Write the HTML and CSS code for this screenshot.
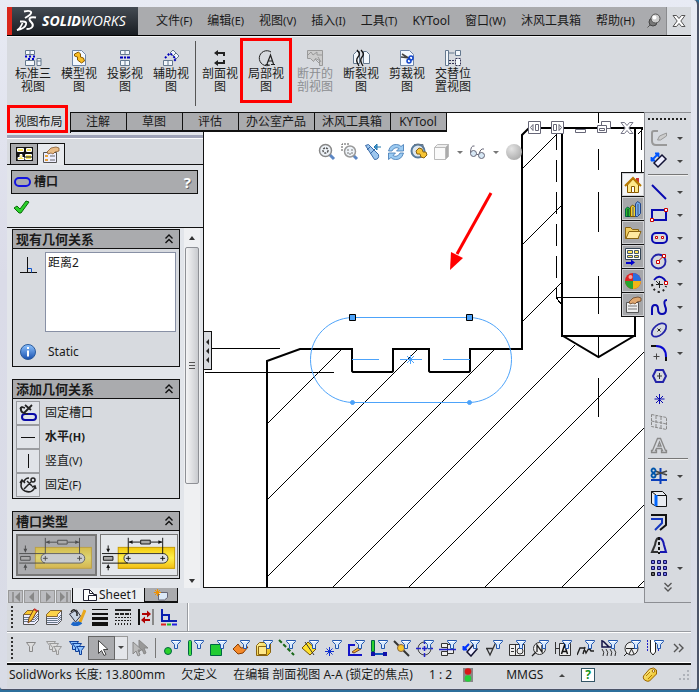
FILE: index.html
```html
<!DOCTYPE html>
<html lang="zh-CN">
<head>
<meta charset="utf-8">
<title>SolidWorks</title>
<link rel="stylesheet" href="styles.css">
</head>
<body>
<svg class="defs" aria-hidden="true">
  <defs>
    <linearGradient id="blue" x1="0" y1="0" x2="0" y2="1"><stop offset="0" stop-color="#8fc4ff"/><stop offset="1" stop-color="#174fae"/></linearGradient>
    <linearGradient id="yellow" x1="0" y1="0" x2="1" y2="1"><stop offset="0" stop-color="#fff6a8"/><stop offset="1" stop-color="#e8b400"/></linearGradient>
    <linearGradient id="bar" x1="0" y1="0" x2="0" y2="1"><stop offset="0" stop-color="#f2c80c"/><stop offset=".5" stop-color="#fff04a"/><stop offset="1" stop-color="#f2bd12"/></linearGradient>
    <radialGradient id="ball" cx=".35" cy=".3" r=".8"><stop offset="0" stop-color="#e4e4e4"/><stop offset="1" stop-color="#a9a9a9"/></radialGradient>
    <symbol id="funnel" viewBox="0 0 18 18"><path d="M8.500 1.500h9v1l-3 3v4h-3v-4l-3-3z" fill="#d8eaff" stroke="#2357ad"/><path d="M10 2.500h5" stroke="#fff"/></symbol>
    <symbol id="sheet" viewBox="0 0 18 18"><path d="M2.500 1.500h9l4 4v11h-13z" fill="#f3f8ff" stroke="#6f86a8"/></symbol>
    <symbol id="chev" viewBox="0 0 10 12"><path d="M1.500 5.500l3.500-3.500 3.500 3.500M1.500 10l3.500-3.500 3.500 3.500" fill="none" stroke="#111" stroke-width="1.400"/></symbol>
    <symbol id="slot" viewBox="0 0 80 40">
      <rect x="18" y="12" width="59" height="22" fill="url(#bar)" stroke="#c79a00"/>
      <rect x="24" y="18.500" width="46" height="10" rx="5" fill="#dfe2e6" stroke="#333"/>
      <path d="M28.500 2v17M64.500 2v17M1 18.500h27M1 28.500h27M29 6.500h12M52 6.500h12M7.500 10v6M7.500 31v5M26 23.500h5M28.500 21v5M62 23.500h5M64.500 21v5" stroke="#111" fill="none"/>
      <path d="M29 6.500l4-2v4zM64 6.500l-4-2v4zM7.500 17.500l-2-4h4zM7.500 29.500l-2 4h4z" fill="#111"/>
      <path d="M41.500 4.500h10v4h-10zM2.500 21.500h10v4h-10z" fill="#aaa" stroke="#111"/>
    </symbol>
  </defs>
</svg>
<div class="window">
  <header class="menubar">
    <div class="logo">
      <svg width="22" height="24" viewBox="0 0 22 24" fill="none" stroke="#fff" aria-hidden="true"><path d="M8 2.500q6-1.500 7 .5t-6 6" stroke-width="2"/><path d="M4 12.500h3q4 0 3 3-1 4-9 5.500 3-1 5.500-7" stroke-width="1.800"/><path d="M20 8.500q-7-1-6.500 2 0 1 2 3t1 4q-1 2.500-6 2.500" stroke-width="2"/></svg>
      <span><b>SOLID</b>WORKS</span>
    </div>
    <nav class="menus">
      <button>文件<small>(F)</small></button><button>编辑<small>(E)</small></button><button>视图<small>(V)</small></button><button>插入<small>(I)</small></button><button>工具<small>(T)</small></button><button>KYTool</button><button>窗口<small>(W)</small></button><button>沐风工具箱</button><button>帮助<small>(H)</small></button>
    </nav>
    <button class="pin" aria-label="固定菜单"><svg width="16" height="16" viewBox="0 0 16 16"><path d="M1.500 14.500l5-5" stroke="#555"/><circle cx="7" cy="9" r="4" fill="#777" stroke="#444"/><circle cx="9.500" cy="5.500" r="4.500" fill="#ccc" stroke="#555"/><circle cx="8.500" cy="4.500" r="2" fill="#fff"/></svg></button>
    <button class="close" aria-label="关闭"><svg width="14" height="12" viewBox="0 0 14 12"><path d="M1 .5h3.500l2.500 3 2.500-3h3.500l-4.200 5.500 4.200 5.500h-3.500l-2.500-3-2.500 3h-3.500l4.200-5.500z" fill="#fff" stroke="#555"/></svg></button>
  </header>

  <section class="ribbon" aria-label="视图布局命令">
    <button><svg viewBox="0 0 18 18"><path d="M1.500 1.500h9v4h-9zM6 1.500v4M1.500 11.500h9v5h-9zM13 9.500h4v7h-4zM13 12h4" fill="#f3f7fb" stroke="#64788e"/><path d="M1 7.500h10M4 10h6" stroke="#00c" stroke-width="2" stroke-dasharray="2 2"/></svg>标准三<br>视图</button>
    <button><svg viewBox="0 0 18 18"><use href="#sheet"/><path d="M4.500 5l4-2 2 2v3l3 1 1 3-3 2-4-3v-3l-3-1z" fill="#f9bd24" stroke="#8a5a00"/></svg>模型视<br>图</button>
    <button><svg viewBox="0 0 18 18"><path d="M4.500 1.500h9v4h-9zM9 1.500v4M4.500 11.500h9v5h-9zM9 11.500v5" fill="#f3f7fb" stroke="#64788e"/><path d="M4 8.500h10" stroke="#00b" stroke-width="2" stroke-dasharray="3 1 2 1"/></svg>投影视<br>图</button>
    <button><svg viewBox="0 0 18 18"><path d="M8 4l3-3 6 6-3 3zM11 7l3-3M1.500 11.500h9v5h-9zM6 11.500v5" fill="#f3f7fb" stroke="#64788e"/><path d="M3 9l5-5 6 6-3 3" fill="none" stroke="#00b" stroke-width="2" stroke-dasharray="2 2"/></svg>辅助视<br>图</button>
    <i class="rule"></i>
    <button><svg viewBox="0 0 18 18"><path d="M6 4h7v3M13 11v3h-7" fill="none" stroke="#222" stroke-width="2"/><path d="M7 1v6l-4-3zM7 11v6l-4-3z" fill="#222"/></svg>剖面视<br>图</button>
    <button class="marked"><svg viewBox="0 0 18 18"><path d="M14 3a7.500 7.500 0 1 0-1 13" fill="none" stroke="#222"/><path d="M8.500 15.500h3M14 15.500h4M10 15l3.500-9 3 9M11 12h4" fill="none" stroke="#222" stroke-width="1.200"/></svg>局部视<br>图</button>
    <i class="gap"></i>
    <button disabled><svg viewBox="0 0 18 18"><path d="M1.500 1.500h15v15h-3v-5l-4-2-2 3-3-3h-3z" fill="#ccc" stroke="#999"/><path d="M2 6l3-3 2 3 4-3v3h5M9 10l5 5M12 8l3 5" stroke="#999" fill="none"/></svg>断开的<br>剖视图</button>
    <button><svg viewBox="0 0 18 18"><path d="M1.500 5.500l3-3h3v12h-6zM11.500 2.500h3l3 3v9h-6z" fill="#f3f7fb" stroke="#64788e"/><path d="M5 1q4 4 1 7t1 9M9 1q4 4 1 7t1 9" fill="none" stroke="#111" stroke-width="1.300"/></svg>断裂视<br>图</button>
    <button><svg viewBox="0 0 18 18"><use href="#sheet"/><path d="M4 5l8 5M3 8l9 1" stroke="#444" stroke-width="1.500"/><circle cx="13" cy="9" r="2" fill="none" stroke="#14c" stroke-width="1.500"/><circle cx="11" cy="12" r="2" fill="none" stroke="#14c" stroke-width="1.500"/></svg>剪裁视<br>图</button>
    <button><svg viewBox="0 0 18 18" fill="#f3f7fb" stroke="#64788e"><path d="M1.500 1.500h3v15h-3zM4.500 4h6M11.500 1.500h5v5h-5z"/><path d="M5 11.500h5M11.500 9.500h5v7h-5zM5 14.500h5" stroke="#335" stroke-dasharray="2 1"/></svg>交替位<br>置视图</button>
  </section>

  <main class="workspace">
    <nav class="tabs">
      <button class="active">视图布局</button><button>注解</button><button>草图</button><button>评估</button><button>办公室产品</button><button>沐风工具箱</button><button>KYTool</button>
    </nav>

    <aside class="panel">
      <div class="panel-tabs">
        <button aria-label="特征树"><svg width="17" height="14" viewBox="0 0 17 14"><path d="M0 0h17v14h-17z" fill="#111"/><path d="M1.500 1.500h6v3h-6zM10.500 1.500h5v3h-5zM9.500 7.500h6v5h-6zM2 12.500v-2h2v-3h2v3h2v2z" fill="#f7e65a" stroke="#fff"/><path d="M9 10h7" stroke="#111"/></svg></button>
        <button class="active" aria-label="属性"><svg width="18" height="18" viewBox="0 0 18 18"><path d="M1.500 6.500h13v10h-13z" fill="#eef" stroke="#555"/><path d="M3 9h3v2h-3zM3 13h3v2h-3z" fill="#e8a33a"/><path d="M8 10h5M8 14h5" stroke="#666"/><path d="M5 6l4-4 5-1 3 1v3l-4 1-2 2-2-1-3 1z" fill="#e9bb85" stroke="#7a4b1c" stroke-width=".7"/></svg></button>
      </div>
      <h1 class="feature"><svg width="17" height="12" viewBox="0 0 17 12"><rect x="1" y="2" width="15" height="8" rx="4" fill="#aaabae" stroke="#1414e0" stroke-width="2"/></svg><span>槽口</span><button aria-label="帮助">?</button></h1>
      <div class="confirm"><button aria-label="确定"><svg width="17" height="14" viewBox="0 0 17 14"><path d="M1 8l3-2 3 3 6-8 3 1-8 11h-2z" fill="#2bd12b" stroke="#0a6b0a"/></svg></button></div>
      <div class="scroller">
        <div class="groups">
          <section class="group">
            <h2>现有几何关系<svg width="10" height="12"><use href="#chev"/></svg></h2>
            <div class="existing">
              <svg width="18" height="18" viewBox="0 0 18 18" fill="none"><path d="M8.500 1v16M1 16.500h17" stroke="#111"/><path d="M9 12.500h3.500v4" stroke="#15c"/></svg>
              <select size="4" aria-label="现有几何关系"><option>距离2</option></select>
            </div>
            <p class="info"><svg width="18" height="18" viewBox="0 0 18 18"><circle cx="9" cy="9" r="7.500" fill="url(#blue)" stroke="#2b5b9c"/><path d="M9 4v2M9 7.500v6" stroke="#fff" stroke-width="2"/></svg>Static</p>
          </section>
          <section class="group">
            <h2>添加几何关系<svg width="10" height="12"><use href="#chev"/></svg></h2>
            <div class="relations">
              <button id="fix-slot"><svg viewBox="0 0 18 18" fill="none"><rect x="3" y="10" width="14" height="6" rx="3" stroke="#0a0aa8" stroke-width="2"/><path d="M6 1l6 5M13 1l-8 8M2 3q-1 5 3 6l4 1M1 5l2-2 3 1" stroke="#222" stroke-width="1.800"/></svg></button><label for="fix-slot">固定槽口</label>
              <button id="horizontal"><svg viewBox="0 0 18 18"><path d="M2 9.500h14" stroke="#111"/></svg></button><label for="horizontal"><b>水平<small>(H)</small></b></label>
              <button id="vertical"><svg viewBox="0 0 18 18"><path d="M9.500 2v14" stroke="#111"/></svg></button><label for="vertical">竖直<small>(V)</small></label>
              <button id="fix"><svg viewBox="0 0 18 18" fill="none" stroke="#222" stroke-width="1.500"><circle cx="14" cy="4" r="2"/><path d="M12 6l-7 7M8 5l5 5M3 5q-3 7 3 10 7 3 10-4M1 7l2-3 3 3M17 13l-1-3-3 1M10 2q-4 0-5 4"/></svg></button><label for="fix">固定<small>(F)</small></label>
            </div>
          </section>
          <section class="group">
            <h2>槽口类型<svg width="10" height="12"><use href="#chev"/></svg></h2>
            <div class="slots">
              <button class="pressed" aria-label="直槽口"><svg viewBox="0 0 80 40"><use href="#slot"/></svg></button>
              <button aria-label="中心点槽口"><svg viewBox="0 0 80 40"><use href="#slot"/></svg></button>
            </div>
          </section>
        </div>
        <div class="scrollbar" aria-hidden="true"><svg width="6" height="4"><path d="M0 4h6l-3-4z" fill="#333"/></svg><span></span><svg width="6" height="4"><path d="M0 0h6l-3 4z" fill="#333"/></svg></div>
      </div>
    </aside>

    <section class="canvas" aria-label="工程图">
      <svg class="drawing" aria-hidden="true">
        <g transform="translate(-204 -113)" fill="none" stroke="#000">
          <g shape-rendering="crispEdges">
            <path d="M268 423l73-73M268 499l150-150M268 576l226-226M332 588l243-243M408 588l236-236M484 588l160-160M561 588l83-83M637 588l7-7M523 168l38-38M523 244l38-38M523 321l38-38M638 134l5-5"/>
            <path d="M211 348.500h69M205 372.500h129M556 297.500h79M556.500 298l6 8M598.500 113v10M598.500 149v21M598.500 192v40M598.500 276v38M598.500 336v21M598.500 378v39"/>
            <path d="M556.500 128v170M641.500 128v170" stroke-dasharray="22 10"/>
          </g>
          <path stroke-width="2" d="M267 588v-227l33-12h52v22l1 1h39l1-1v-22h36v22l1 1h39l1-1v-22h52v-214l7-7h114M562 128v208h73v-208M563 336l35.500 21 35.500-21"/>
          <g stroke="#4da3fa">
            <path d="M352 317.500h118c23 1 41.500 19 41.500 42s-18.500 42-41.500 43h-118c-23-1-41.500-20-41.500-43s18.500-41 41.500-42z"/>
            <path d="M352 359.500h27M400 359.500h22M443 359.500h27M410.500 355v9M407 356l7 7M414 356l-7 7"/>
            <circle cx="352.500" cy="402.500" r="2" fill="#4da3fa"/><circle cx="469.500" cy="402.500" r="2" fill="#4da3fa"/>
            <path d="M349.500 314.500h6v6h-6zM466.500 314.500h6v6h-6z" fill="#4da3fa" stroke="#000"/>
          </g>
          <path d="M491 193l-34 61" stroke="#f00" stroke-width="3"/><path d="M450 270l1-18 12 6z" fill="#f00" stroke="none"/>
        </g>
      </svg>
      <div class="hud">
        <button aria-label="整屏显示"><svg viewBox="0 0 18 18"><path d="M11 11l5 5" stroke="#5b86c4" stroke-width="3"/><circle cx="7.500" cy="7.500" r="6" fill="#eef3f8" stroke="#888" stroke-width="1.500"/><circle cx="7.500" cy="7.500" r="2.500" fill="none" stroke="#555" stroke-width="1.500" stroke-dasharray="2 1"/></svg></button>
        <button aria-label="局部放大"><svg viewBox="0 0 18 18"><path d="M1 8v-7h8" fill="none" stroke="#555" stroke-dasharray="2 1"/><path d="M12 12l4 4" stroke="#5b86c4" stroke-width="3"/><circle cx="9" cy="8.500" r="5.500" fill="#eef3f8" stroke="#999" stroke-width="1.500"/><path d="M7 6v5h4v-5" stroke="#777" fill="none" stroke-dasharray="2 1"/></svg></button>
        <button aria-label="上一视图"><svg viewBox="0 0 18 18"><path d="M1.500 2.500l3-1 10 10q1 5-4 5z" fill="#9dc6ee" stroke="#3b6ba8"/><path d="M3 7l4-4M6 11l5-5" stroke="#3b6ba8"/><path d="M10 4h7M10 4l3-3v6z" stroke="#27a" fill="#58a8f0"/></svg></button>
        <button aria-label="旋转"><svg viewBox="0 0 18 18"><path d="M1.500 8q2-7 8-6.500 3 0 4.500 2l2.500-2v6.500h-7l2.500-2.500q-2-1.500-4-.5-2 .5-3 3zM16.500 10q-2 7-8 6.500-3 0-4.500-2l-2.500 2v-6.500h7l-2.500 2.500q2 1.500 4 .5 2-.5 3-3z" fill="#9ccbf2" stroke="#3d76b2" stroke-width=".8"/></svg></button>
        <button aria-label="3D工程图"><svg viewBox="0 0 18 18"><circle cx="8" cy="8" r="6.500" fill="#dde6ee" stroke="#567a9c" stroke-width="2"/><path d="M4 1.500h9v4" fill="none" stroke="#678"/><path d="M6 8l3-3 3 1 1 3h3l1 3-3 3-3-1-1-3h-3z" fill="#f7c535" stroke="#8a6410"/></svg></button>
        <button aria-label="显示样式"><svg viewBox="0 0 18 18" fill="#eee" stroke="#bbb"><path d="M1.500 4.500l3-3h11l-3 3z"/><path d="M12.500 4.500l3-3v12l-3 3z" fill="#aaa"/><path d="M1.500 4.500h11v12h-11z" fill="#fafafa"/></svg></button>
        <i class="caret"></i>
        <button aria-label="隐藏/显示项目"><svg viewBox="0 0 18 18" fill="#d7e8f5" stroke="#667"><path d="M1.500 10q0-8 4-7M10 12q1-7 5-6M7 11l3 1" fill="none"/><circle cx="4.500" cy="10.500" r="3"/><circle cx="12.500" cy="12.500" r="3"/></svg></button>
        <i class="caret"></i>
        <button aria-label="布景"><svg viewBox="0 0 18 18"><circle cx="9" cy="9" r="8" fill="url(#ball)"/></svg></button>
      </div>
      <div class="docbuttons">
        <button aria-label="左侧"><svg viewBox="0 0 14 14" fill="#fff" stroke="#667"><path d="M.5 .5h12v12h-12z"/><path d="M5 3.500l-2.500 3 2.500 3zM7.500 3.500h3v6h-3z"/></svg></button>
        <button aria-label="右侧"><svg viewBox="0 0 14 14" fill="#fff" stroke="#667"><path d="M.5 .5h12v12h-12z"/><path d="M8 3.500l2.500 3-2.500 3zM2.500 3.500h3v6h-3z"/></svg></button>
        <button aria-label="最小化"><svg viewBox="0 0 14 14"><path d="M1.500 8.500h10v3h-10z" fill="#fff" stroke="#667"/></svg></button>
        <button aria-label="还原"><svg viewBox="0 0 14 14" fill="#fff" stroke="#667"><path d="M4.500 .5h9v7h-9z"/><path d="M.5 4.500h9v7h-9zM2.500 7.500h5v2h-5z"/></svg></button>
        <button aria-label="关闭文档"><svg viewBox="0 0 14 12"><path d="M1 .5h3.500l2.500 3 2.500-3h3.500l-4.200 5.500 4.200 5.500h-3.500l-2.500-3-2.500 3h-3.500l4.200-5.500z" fill="#fff" stroke="#778"/></svg></button>
      </div>
      <button class="collapse" aria-label="折叠面板"><svg width="4" height="26" viewBox="0 0 4 26"><path d="M4 1v6l-3-3zM4 10v6l-3-3zM4 19v6l-3-3z" fill="#222"/></svg></button>
      <div class="taskpane">
        <button class="active" aria-label="资源"><svg viewBox="0 0 18 18"><path d="M12 2h3v5h-3z" fill="#c33"/><path d="M3.500 9v7.500h11v-7.500l-5.500-6z" fill="#ffe98a" stroke="#8a5a00"/><path d="M1 10l8-8 8 8" fill="none" stroke="#b97a00" stroke-width="2"/><path d="M7.500 10.500h3v6h-3z" fill="#fff" stroke="#8a5a00"/></svg></button>
        <button aria-label="设计库"><svg viewBox="0 0 18 18"><path d="M1.500 9l2-2 3 2v7.500h-5z" fill="#2bb52b" stroke="#064"/><path d="M4 9v8M9 7v10M14 4v11" stroke="#033"/><path d="M6.500 7l2-2 3 2v9.500h-5z" fill="#f5d02a" stroke="#750"/><path d="M11.500 4l2-2.500 3 2v10l-3 3h-2z" fill="#76aef0" stroke="#248"/><path d="M9 7v9M14 4v11" stroke="#457"/></svg></button>
        <button aria-label="文件探索器"><svg viewBox="0 0 18 18"><path d="M1.500 14.500v-11h5l2 2h6v9z" fill="#f2cf63" stroke="#8a6410"/><path d="M2 14.500l3-7h12l-3 7z" fill="#ffe9a0" stroke="#8a6410"/></svg></button>
        <button aria-label="视图调色板"><svg viewBox="0 0 18 18"><path d="M1.500 .5h15v11h-15z" fill="#fff" stroke="#345"/><path d="M3.500 2.500h5v3h-5zM10.500 2.500h4v3h-4zM3.500 7.500h5v2h-5zM10.500 7.500h4v2h-4z" fill="#ffe45a" stroke="#456"/><path d="M2 15h7" stroke="#00c" stroke-width="2"/><path d="M7 11.500v6l4-3z" fill="#00c"/></svg></button>
        <button aria-label="外观"><svg viewBox="0 0 18 18"><circle cx="9" cy="9" r="8" fill="#d22"/><path d="M9 9v-8a8 8 0 0 1 8 8z" fill="#2a6ee0"/><path d="M9 9h8a8 8 0 0 1-8 8z" fill="#f2b517"/><path d="M9 9v8a8 8 0 0 1-8-8z" fill="#27a52f"/><circle cx="6.500" cy="5" r="2" fill="#fff" opacity=".6"/></svg></button>
        <button aria-label="自定义属性"><svg viewBox="0 0 18 18"><path d="M2.500 6.500h12v10h-12z" fill="#eee" stroke="#555"/><path d="M4 10h9M4 13h9" stroke="#777"/><path d="M5 6l4-4 5-1 3 1v3l-4 1-2 2-2-1-3 1z" fill="#e0a870" stroke="#6b4423" stroke-width=".8"/></svg></button>
      </div>
    </section>

    <div class="sheets">
      <div class="sheetnav">
        <button aria-label="首页"><svg viewBox="0 0 8 10"><path d="M1 0v10" stroke="#888" stroke-width="1.500"/><path d="M8 0v10l-5-5z" fill="#888"/></svg></button><button aria-label="上一页"><svg viewBox="0 0 8 10"><path d="M6 0v10l-5-5z" fill="#888"/></svg></button><button aria-label="下一页"><svg viewBox="0 0 8 10"><path d="M2 0v10l5-5z" fill="#888"/></svg></button><button aria-label="末页"><svg viewBox="0 0 8 10"><path d="M0 0v10l5-5z" fill="#888"/><path d="M7 0v10" stroke="#888" stroke-width="1.500"/></svg></button>
      </div>
      <button class="sheet"><svg width="14" height="12" viewBox="0 0 14 12"><path d="M.5 .5h6l4 4v1h3v6h-13z" fill="#fff" stroke="#223"/><path d="M6.500 .5v4h4M5.500 11v-4.500h8" fill="none" stroke="#223"/></svg>Sheet1</button>
      <button class="addsheet" aria-label="添加图纸"><svg width="15" height="12" viewBox="0 0 15 12"><path d="M4.500 3.500h9v5l-3 2.500h-6z" fill="#dce9f7" stroke="#667"/><path d="M3.500 0v7M0 3.500h7M1 1l5 5M6 1l-5 5" stroke="#f29200"/></svg></button>
    </div>

    <nav class="tools" aria-label="草图工具">
      <i class="grip"></i>
      <button disabled class="drop" aria-label="草图"><svg viewBox="0 0 18 18" fill="none" stroke="#999"><path d="M8 2h-4q-2 0-2 2v8q0 4 4 4h11" stroke-width="2"/><path d="M7.500 11l2-4 7-3v3l-6 4z" fill="#ccc"/></svg></button>
      <button class="drop" aria-label="智能尺寸"><svg viewBox="0 0 18 18" fill="none"><path d="M2 8l6-6M1.500 9v-4M1 8.500h4M8.500 1v4M9 1.500h-4" stroke="#05f" stroke-width="1.800"/><path d="M4 11l8-8 4 4-8 8z" stroke="#113" stroke-width="1.500" fill="#eef"/></svg></button>
      <hr>
      <button class="drop" aria-label="直线"><svg viewBox="0 0 18 18"><path d="M2 2l14 14" stroke="#0909b0" stroke-width="2"/></svg></button>
      <button class="drop" aria-label="矩形"><svg viewBox="0 0 18 18" fill="none"><path d="M2 4h14v10h-14z" stroke="#0909b0" stroke-width="2"/><path d="M.5 12.500h3v3h-3zM14.500 2.500h3v3h-3z" fill="#fff" stroke="#c00"/></svg></button>
      <button class="drop" aria-label="槽口"><svg viewBox="0 0 18 18" fill="none"><rect x="2" y="4" width="15" height="10" rx="4" stroke="#0909b0" stroke-width="2"/><path d="M5.500 7.500h2v2h-2zM11.500 7.500h2v2h-2z" fill="#fff" stroke="#c00"/></svg></button>
      <button class="drop" aria-label="圆"><svg viewBox="0 0 18 18" fill="none"><circle cx="8.500" cy="9.500" r="7" stroke="#2323a8" stroke-width="1.800"/><path d="M8 9.500l6-6" stroke="#c00"/><path d="M6.500 8.500h3v3h-3zM12.500 2.500h3v3h-3z" fill="#fff" stroke="#c00"/></svg></button>
      <button class="drop" aria-label="圆弧"><svg viewBox="0 0 18 18" fill="none"><path d="M4 5q5-6 10-1 2 2 2 4" stroke="#0909b0" stroke-width="1.800"/><path d="M9.500 6v7M6 9.500h7M6 6l3 3" stroke="#222"/><path d="M2 9q1 7 7 8 6-1 7-6" stroke="#222" stroke-width="2" stroke-dasharray="2 3"/><path d="M14.500 6.500h3v3h-3z" fill="#fff" stroke="#c00"/></svg></button>
      <button class="drop" aria-label="样条曲线"><svg viewBox="0 0 18 18"><path d="M2 17v-6q0-4 3-4t3 4q0 5 4 5t4-4q0-2-1-4-2-6 2-6" fill="none" stroke="#0909b0" stroke-width="2"/></svg></button>
      <button class="drop" aria-label="椭圆"><svg viewBox="0 0 18 18" fill="none"><ellipse cx="9" cy="9" rx="8.500" ry="5" transform="rotate(-40 9 9)" stroke="#2323a8" stroke-width="1.800"/><path d="M7.500 7.500l3 3M10.500 7.500l-3 3" stroke="#222"/></svg></button>
      <button class="drop" aria-label="圆角"><svg viewBox="0 0 18 18" fill="none"><path d="M1 2h5M16 13v4" stroke="#111" stroke-width="2"/><path d="M6 2q10 0 10 11" stroke="#0909d0" stroke-width="2"/><path d="M3.500 12.500h6M6.500 9.500v6" stroke="#444"/></svg></button>
      <button aria-label="多边形"><svg viewBox="0 0 18 18" fill="none"><path d="M6 3h7l3 6-3 6h-7l-3-6z" stroke="#2323a8" stroke-width="2"/><path d="M7 9h5M9.500 6v6" stroke="#333"/></svg></button>
      <button aria-label="点"><svg viewBox="0 0 18 18"><path d="M9.500 4v10M4.500 9h10M6 6l7 7M13 6l-7 7" stroke="#0909b0"/></svg></button>
      <button disabled aria-label="基准面"><svg viewBox="0 0 18 18"><path d="M1.500 1.500l15 3v12l-15-3zM1.500 8l15 3M6 3v11M11 4v11" fill="none" stroke="#888" stroke-dasharray="3 1"/></svg></button>
      <button disabled aria-label="文字"><svg viewBox="0 0 18 18" fill="none" stroke="#888" stroke-width="1.300"><path d="M1.500 16.500v-2h1l5-12h3l5 12h1v2h-5v-2h1l-1-2h-5l-1 2h1v2zM8 10h3l-1.500-4z"/></svg></button>
      <hr>
      <button class="drop" aria-label="剪裁实体"><svg viewBox="0 0 18 18" fill="none"><path d="M1 13h16M10.500 1v16" stroke="#0b3fbb" stroke-width="2"/><path d="M5 4l12 4M5 8l12-4" stroke="#444" stroke-width="1.800"/><circle cx="3.500" cy="3.500" r="2" stroke="#05a" stroke-width="1.800"/><circle cx="3.500" cy="8.500" r="2" stroke="#05a" stroke-width="1.800"/></svg></button>
      <button class="drop" aria-label="转换实体引用"><svg viewBox="0 0 18 18"><path d="M1.500 1.500h11l4 4v11h-10l-5-3zM1.500 1.500l5 4v11M6.500 5.500h10" fill="#e8ebf0" stroke="#111"/><path d="M6 5v11" stroke="#06f" stroke-width="3"/></svg></button>
      <button aria-label="等距实体"><svg viewBox="0 0 18 18" fill="none"><path d="M1 2h15v10l-6 5" stroke="#111" stroke-width="2"/><path d="M1 6h11v4l-7 7" stroke="#1437c0" stroke-width="2"/></svg></button>
      <button aria-label="镜向实体"><svg viewBox="0 0 18 18" fill="none"><path d="M8 2q-2 1-3 7l-3 7h6" stroke="#333" stroke-width="2"/><path d="M10 2q3 1 4 7l2 7h-6" stroke="#1717b0" stroke-width="2"/><path d="M9 1v17" stroke="#111" stroke-width="2" stroke-dasharray="3 2"/></svg></button>
      <button class="drop" aria-label="线性阵列"><svg viewBox="0 0 18 18" fill="#7777e8" stroke="#101060"><path d="M1.500 1.500h3v3h-3zM7.500 1.500h3v3h-3zM13.500 1.500h3v3h-3zM1.500 7.500h3v3h-3zM7.500 7.500h3v3h-3zM13.500 7.500h3v3h-3zM7.500 13.500h3v3h-3zM13.500 13.500h3v3h-3z"/><path d="M1.500 13.500h3v3h-3z" fill="#666" stroke="#111"/></svg></button>
      <button class="more" aria-label="更多"><svg viewBox="0 0 10 12"><path d="M1.500 2l3.500 3.500 3.500-3.500M1.500 6.500l3.500 3.500 3.500-3.500" fill="none" stroke="#555" stroke-width="1.300"/></svg></button>
    </nav>
  </main>

  <section class="strip format" aria-label="线型">
    <i class="grip"></i>
    <button aria-label="图层属性"><svg viewBox="0 0 18 18"><path d="M1.500 6.500l4-4h11v10l-4 4h-11z" fill="#eef" stroke="#555"/><path d="M1.500 6.500l4-4h11l-4 4z" fill="#f8c62d" stroke="#863"/><path d="M2 9.500h10.500l4-4M2 11.500h10.500l4-4M2 13.500h10.500l4-4" fill="none" stroke="#678"/><path d="M6 15l1-5 5-9 3 2-5 9z" fill="#f8c62d" stroke="#742"/><path d="M12 1l3 2" stroke="#c33" stroke-width="2"/></svg></button>
    <button aria-label="图层"><svg viewBox="0 0 18 18"><path d="M1.500 6.500l4-4h11v10l-4 4h-11z" fill="#eef" stroke="#555"/><path d="M1.500 6.500l4-4h11l-4 4v2h-11z" fill="#fbd24a" stroke="#863"/><path d="M2 10.500h10.500l4-4M2 12.500h10.500l4-4M2 14.500h10.500l4-4" fill="none" stroke="#678"/></svg></button>
    <button aria-label="线色"><svg viewBox="0 0 18 18"><path d="M4 15q4 3 9-1" stroke="#1c66c8" stroke-width="4" fill="none"/><path d="M1.500 6l7-4 4 6-5 6z" fill="#c8d3e3" stroke="#334"/><path d="M3 4q3-5 6 1v3" fill="none" stroke="#222" stroke-width="1.500"/><path d="M12 14l5-12" fill="none" stroke="#e8a71c" stroke-width="3"/></svg></button>
    <button aria-label="线粗"><svg viewBox="0 0 18 18" stroke="#111"><path d="M1 1.500h16"/><path d="M1 6h16" stroke-width="2"/><path d="M1 10.500h16" stroke-width="3"/><path d="M1 16h16" stroke-width="4"/></svg></button>
    <button aria-label="线条样式"><svg viewBox="0 0 18 18" stroke="#222"><path d="M1 2h16" stroke-width="2"/><path d="M1 6h16" stroke-width="2" stroke-dasharray="4 1"/><path d="M1 9.500h16M1 12.500h16" stroke-dasharray="2 1"/><path d="M1 16h16" stroke-width="2" stroke-dasharray="1 2"/></svg></button>
    <button aria-label="隐藏边线"><svg viewBox="0 0 18 18"><path d="M2 1v16" stroke="#111" stroke-width="2"/><path d="M16 1v16" stroke="#888" stroke-width="2"/><path d="M5 6h6M7 12h6" stroke="#b00000" stroke-width="2"/><path d="M10 2.500v7l4-3.500zM8 8.500v7l-4-3.500z" fill="#b00000"/></svg></button>
    <button aria-label="颜色显示模式"><svg viewBox="0 0 18 18" fill="none"><path d="M2 1v12h15M2 7h7v6" stroke="#0a1fb0" stroke-width="2"/><path d="M1 16.500h5" stroke="#d22" stroke-width="2"/><path d="M7 16.500h4" stroke="#2b2" stroke-width="2"/><path d="M12 16.500h5" stroke="#22d" stroke-width="2"/></svg></button>
  </section>

  <section class="strip filters" aria-label="选择过滤器">
    <i class="grip"></i>
    <button disabled aria-label="切换过滤器"><svg viewBox="0 0 18 18"><path d="M4.500 3.500h9l-3 4v5h-3v-5z" fill="#ddd" stroke="#888"/></svg></button>
    <button disabled aria-label="清除过滤器"><svg viewBox="0 0 18 18" fill="#ddd" stroke="#999"><path d="M1.500 2.500h9l-3 4v4h-3v-4z"/><path d="M4.500 4.500h9l-3 4v4h-3v-4z"/><path d="M8.500 7.500h8l-3 4v4h-2v-4z"/></svg></button>
    <button aria-label="所有过滤器"><svg viewBox="0 0 18 18" fill="#8fc4ff" stroke="#0f3f98"><path d="M1.500 2.500h9l-3 4v4h-3v-4z"/><path d="M4.500 4.500h9l-3 4v4h-3v-4z"/><path d="M8.500 7.500h8l-3 4v4h-2v-4z"/></svg></button>
    <button class="select" aria-label="选择"><svg viewBox="0 0 18 18"><path d="M5.500 1.500v13l3-3 2.500 5 2-1-2.500-5h4.500z" fill="#fff" stroke="#444"/></svg></button><button class="selectdrop" aria-label="选择选项"><i class="caret"></i></button>
    <button disabled aria-label="逆转选择"><svg viewBox="0 0 18 18" fill="#999" stroke="#888"><path d="M8 1v12l3-3 2 5 2-1-2-5h4z"/><path d="M2 3v12l3-3 2 5 2-1-2-5h4z" fill="#bbb"/></svg></button>
    <i class="rule"></i>
    <button aria-label="过滤顶点"><svg viewBox="0 0 18 18"><circle cx="5" cy="12" r="3.500" fill="#2bd12b" stroke="#064"/><use href="#funnel"/></svg></button>
    <button aria-label="过滤边线"><svg viewBox="0 0 18 18"><rect x="2.500" y="1.500" width="3" height="15" rx="1" fill="#3ee03e" stroke="#064"/><use href="#funnel"/></svg></button>
    <button aria-label="过滤面"><svg viewBox="0 0 18 18"><path d="M1.500 5.500h11v11h-11z" fill="#22cc33" stroke="#064"/><use href="#funnel"/></svg></button>
    <button aria-label="过滤曲面实体"><svg viewBox="0 0 18 18"><path d="M1 10l5-5 3 4 7-1-5 6-5 1z" fill="#f58a2a" stroke="#8a3d00"/><use href="#funnel"/></svg></button>
    <button aria-label="过滤实体"><svg viewBox="0 0 18 18"><path d="M1.500 6.500l3-3h11v10l-3 3h-11z" fill="url(#yellow)" stroke="#8a6410"/><path d="M3.500 7.500h8v8h-8z" fill="#ffe88a" stroke="#8a6410"/><use href="#funnel"/></svg></button>
    <button aria-label="过滤基准轴"><svg viewBox="0 0 18 18"><path d="M1 1l15 15" stroke="#186818" stroke-width="2" stroke-dasharray="4 2"/><use href="#funnel"/></svg></button>
    <button aria-label="过滤基准面"><svg viewBox="0 0 18 18"><path d="M1 9l6-6 8 7-6 6z" fill="#ffe12e" stroke="#750"/><path d="M4 3l9 13" stroke="#333"/><use href="#funnel"/></svg></button>
    <button aria-label="过滤草图点"><svg viewBox="0 0 18 18"><path d="M5.500 8v9M1 12.500h9M2.500 9.500l6 6M8.500 9.500l-6 6" stroke="#1130d0"/><use href="#funnel"/></svg></button>
    <button aria-label="过滤草图"><svg viewBox="0 0 18 18"><path d="M8 6h-6v10h13" fill="none" stroke="#1414c8" stroke-width="2"/><path d="M5 13l7-5 2 2-7 4z" fill="#f8b62d" stroke="#742"/><use href="#funnel"/></svg></button>
    <button aria-label="过滤草图线段"><svg viewBox="0 0 18 18"><path d="M1.500 1.500h3v11h-3z" fill="#2bd12b" stroke="#064"/><path d="M3 15h12" stroke="#15b" stroke-width="2"/><path d="M1 13h4v4h-4zM13 13h4v4h-4z" fill="#11a"/><use href="#funnel"/></svg></button>
    <button aria-label="过滤中点"><svg viewBox="0 0 18 18"><path d="M1 2l15 15" stroke="#333" stroke-width="2"/><circle cx="8" cy="9" r="3.500" fill="#f8c62d" stroke="#864"/><use href="#funnel"/></svg></button>
    <button aria-label="过滤中心符号线"><svg viewBox="0 0 18 18"><circle cx="8.500" cy="9.500" r="6.500" fill="none" stroke="#444"/><path d="M0 9.500h5M6 9.500h5M12 9.500h5M8.500 1v4M8.500 7v5M8.500 14v4" stroke="#22c" stroke-width="1.500"/><use href="#funnel"/></svg></button>
    <button aria-label="过滤中心线"><svg viewBox="0 0 18 18"><path d="M2.500 4.500h6v4h-6zM2.500 12.500h6v4h-6zM8.500 5.500h6v9h-6z" fill="#eee" stroke="#333"/><path d="M0 10.500h17" stroke="#22c" stroke-width="1.500"/><use href="#funnel"/></svg></button>
    <button aria-label="过滤尺寸"><svg viewBox="0 0 18 18"><path d="M2 10l5-5M1.500 11v-4M1 10.500h4" stroke="#03f" stroke-width="2"/><path d="M5 13l6-7 4 4-6 7z" fill="#eef" stroke="#113" stroke-width="1.500"/><use href="#funnel"/></svg></button>
    <button aria-label="过滤表面粗糙度"><svg viewBox="0 0 18 18"><path d="M1 9.500h7M2 10l3 6 6-13" fill="none" stroke="#333" stroke-width="1.300"/><use href="#funnel"/></svg></button>
    <button aria-label="过滤形位公差"><svg viewBox="0 0 18 18"><path d="M1.500 5.500h15v11h-15zM7.500 5.500v11" fill="#eee" stroke="#333"/><circle cx="12" cy="12" r="3" fill="none" stroke="#333"/><path d="M3 9.500h3M3 12.500h3" stroke="#333"/><use href="#funnel"/></svg></button>
    <button aria-label="过滤注释"><svg viewBox="0 0 18 18"><circle cx="8.500" cy="9.500" r="6" fill="#eee" stroke="#333"/><path d="M1 17l4-4M6 13v-7l5 7v-7" stroke="#222" stroke-width="1.300" fill="none"/><use href="#funnel"/></svg></button>
    <button aria-label="过滤基准特征"><svg viewBox="0 0 18 18"><path d="M1.500 3v12M2 9.500h4M5.500 4.500h11v12h-11z" fill="#eee" stroke="#333"/><path d="M7.500 15l3-9 3 9M8.500 12.500h4" stroke="#111" stroke-width="1.500" fill="none"/><use href="#funnel"/></svg></button>
    <button aria-label="过滤焊接符号"><svg viewBox="0 0 18 18"><path d="M0 16l3-7h4l2 5 3-5 2 3h3M8 8l-2 7" fill="none" stroke="#222" stroke-width="1.400"/><use href="#funnel"/></svg></button>
    <button aria-label="过滤焊缝"><svg viewBox="0 0 18 18"><path d="M2 1v7h13M3 2l6 6" fill="none" stroke="#114" stroke-width="1.500"/><path d="M2 10q3 3 1 7M6 10q3 3 1 7M10 10q3 3 1 7M14 10q3 3 1 7" fill="none" stroke="#333"/><use href="#funnel"/></svg></button>
    <button aria-label="过滤基准目标"><svg viewBox="0 0 18 18"><circle cx="8.500" cy="9.500" r="6.500" fill="#eee" stroke="#333"/><path d="M1 17l3-3M3 9.500h11M6 15l2.500-5 2.500 5" stroke="#222" fill="none"/><use href="#funnel"/></svg></button>
    <button aria-label="过滤装饰螺纹线"><svg viewBox="0 0 18 18"><path d="M1.500 1v11M12.500 1v11" stroke="#22c" stroke-dasharray="2 1"/><path d="M4.500 1v12l2.500 3 2.500-3v-12" fill="#fff" stroke="#222"/><use href="#funnel"/></svg></button>
    <button aria-label="更多"><svg viewBox="0 0 18 18"><path d="M5 5l4 4-4 4M10 5l4 4-4 4" fill="none" stroke="#555" stroke-width="1.400"/></svg></button>
  </section>

  <footer class="status">
    <span>SolidWorks 长度: 13.800mm</span>
    <span>欠定义</span>
    <span>在编辑 剖面视图 A-A (锁定的焦点)</span>
    <span class="scale">1 : 2 <svg width="12" height="14" viewBox="0 0 12 14"><path d="M1 0h10v14h-10z" fill="#888"/><circle cx="6" cy="3.500" r="3.300" fill="#d81818"/><circle cx="6" cy="10.500" r="3.300" fill="#25d03a"/></svg></span>
    <button class="units">MMGS <i class="caret up"></i></button>
    <button class="help" aria-label="快速提示">?</button>
    <button class="tag" aria-label="标签"><svg width="16" height="16" viewBox="0 0 16 16"><path d="M1.500 9l6-7 4-1 3 2v4l-7 7q-2 1-5-1-2-2-1-4z" fill="url(#yellow)" stroke="#9c6500"/><circle cx="11.500" cy="4" r="1.300" fill="#fff" stroke="#9c6500"/><path d="M4 9l4-4M6 12l4-4" stroke="#b57c00"/></svg></button>
    <svg width="10" height="10" viewBox="0 0 10 10" fill="#aeb2b9"><path d="M8 0h2v2h-2zM4 4h2v2h-2zM8 4h2v2h-2zM0 8h2v2h-2zM4 8h2v2h-2zM8 8h2v2h-2z"/></svg>
  </footer>
</div>
</body>
</html>
```
FILE: styles.css
```css
* { box-sizing: border-box; }

body {
  margin: 0;
  padding-bottom: 2px;
  background: #2c6f9c;
  color: #1a1a1a;
  font: 12px/16px "Noto Sans", "Noto Sans CJK SC", sans-serif;
}

button, select { font: inherit; color: inherit; }
button { margin: 0; padding: 0; border: 0; background: none; }
h1, h2, p { margin: 0; font-size: 12px; }
small { font-size: 11px; }
svg { display: block; flex: none; }
.defs { position: absolute; width: 0; height: 0; }

.window {
  display: flex;
  flex-direction: column;
  min-height: calc(100vh - 2px);
  padding: 7px 6px 1px 7px;
  border-right: 2px solid #4c5468;
  border-bottom: 1px solid #4c5468;
  border-radius: 0 5px 3px 3px;
  background: linear-gradient(#e8ebf4, #dadbe8 40%, #d9dce6);
}

.caret { width: 0; height: 0; border: 3px solid transparent; border-top-color: #444; border-bottom: 0; }
.caret.up { border: 3px solid transparent; border-bottom-color: #444; border-top: 0; }

/* menu bar */
.menubar { display: flex; height: 29px; border-bottom: 1px solid #000; background: #aaabae; }
.logo {
  display: flex;
  align-items: center;
  gap: 4px;
  width: 131px;
  padding-left: 4px;
  border-left: 5px solid #d9271c;
  background: linear-gradient(#444b53, #191d22);
  color: #fff;
  font: italic 14px/28px "Open Sans", "Noto Sans", sans-serif;
}
.menus { display: flex; flex: 1; align-items: center; gap: 15px; padding-left: 18px; white-space: nowrap; }
.pin { width: 26px; padding-left: 5px; border-right: 1px solid #8a8b8e; }
.close { display: grid; place-items: center; width: 24px; background: #d7dade; }

/* ribbon */
.ribbon { display: flex; height: 76px; padding: 4px 3px; border-top: 1px solid #f2f3f5; background: #d7dadf; }
.ribbon button { position: relative; width: 46px; padding-top: 8px; line-height: 13px; align-self: flex-start; white-space: nowrap; }
.ribbon button svg { width: 18px; height: 18px; margin: 0 auto; }
.ribbon button:disabled { color: #8c8e91; }
.ribbon .rule { width: 1px; height: 65px; margin: 0 1px; background: #555; }
.ribbon .gap { width: 3px; }
.marked::after, .tabs .active::after { content: ""; position: absolute; border: 3px solid #f00; }
.marked::after { inset: -3px -3px -10px -3px; }

/* workspace */
.workspace {
  display: grid;
  flex: 1;
  grid-template-columns: 196px 1fr 47px;
  grid-template-rows: 21px 1fr 15px;
}
.tabs { z-index: 2; grid-area: 1 / 1 / 2 / 3; display: flex; justify-self: start; }
.tabs button {
  min-width: 56px;
  height: 20px;
  padding: 0 8px 0 7px;
  border: solid #111;
  border-width: 1px 1px 2px 0;
  background: #aaabae;
  line-height: 16px;
  white-space: nowrap;
}
.tabs .active { position: relative; width: 64px; height: 21px; border-width: 0 1px 0 0; background: #d7dadf; padding: 0 7px 2px; }
.tabs .active::after { inset: -7px 2px 0 0; }

.panel {
  grid-area: 2 / 1 / 3 / 2;
  display: flex;
  flex-direction: column;
  min-height: 0;
  padding-top: 2px;
  background: #e2e5ea;
}
.panel-tabs { display: flex; align-items: flex-end; height: 30px; padding: 0 3px; border-top: 3px solid #9fa3b8; border-bottom: 1px solid #111; background: linear-gradient(#fff 1px, #d7dadf 1px); }
.panel-tabs button { display: grid; place-items: center; width: 28px; height: 21px; border: 1px solid #111; border-bottom: 0; background: #aaabae; }
.panel-tabs .active { height: 22px; margin-bottom: -1px; background: #e8eaee; border-left: 0; width: 27px; }
.feature { display: flex; align-items: center; height: 24px; margin: 5px 5px 0 4px; padding: 0 6px 0 2px; border: 1px solid #111; background: #aaabae; gap: 3px; font-size: 12px; }
.feature span { flex: 1; }
.feature button { color: #fff; font-weight: 700; font-size: 15px; text-shadow: 1px 1px #666; }
.confirm { height: 34px; padding: 6px 0 0 6px; border-bottom: 1px solid #111; }

.scroller { display: flex; flex: 1; min-height: 0; }
.groups { display: flex; flex: 1; flex-direction: column; gap: 12px; padding: 1px 4px 0 5px; }
.group { border: 1px solid #111; background: #d7dadf; }
.group h2 { display: flex; justify-content: space-between; align-items: center; height: 19px; padding: 0 5px 0 3px; border-bottom: 1px solid #111; background: #aaabae; font-size: 13px; }
.existing { display: flex; gap: 8px; padding: 3px 3px 0 6px; }
.existing svg { margin-top: 4px; }
.existing select { flex: 1; min-width: 0; height: 80px; padding: 0; border: 1px solid #8890a5; border-radius: 0; background: #fff; overflow: hidden; outline: 0; }
.existing option { padding: 0 2px; min-height: 16px; }
.info { display: flex; align-items: center; gap: 11px; height: 34px; padding: 5px 6px 0; }
.relations { display: grid; grid-template-columns: 24px 1fr; grid-auto-rows: 24px; align-items: center; column-gap: 5px; padding: 2px 3px 0; }
.relations button { display: grid; place-items: center; width: 24px; height: 24px; border: 1px solid #9a9ca0; background: #e0e3e8; }
.relations button svg { width: 18px; height: 18px; }
.group:nth-child(2) { height: 120px; }
.slots { display: flex; gap: 3px; padding: 3px 1px 2px 3px; }
.slots button { flex: 1; height: 42px; border: 1px solid #777; background: #e4e7eb; overflow: hidden; }
.slots button svg { width: 100%; height: 40px; }
.slots .pressed { border-width: 2px; background: #aaabae; }
.slots .pressed svg { height: 38px; opacity: .6; }
.scrollbar { display: flex; flex-direction: column; align-items: center; justify-content: space-between; width: 16px; margin-right: 3px; padding: 8px 0 5px; background: #eff0f2; }
.scrollbar span { flex: none; width: 14px; height: 237px; margin: 7px 0 auto; border: 1px solid #8e9095; border-radius: 2px; background: repeating-linear-gradient(#555 0 1px, transparent 1px 3px) center / 6px 8px no-repeat, linear-gradient(90deg, #f5f5f6, #c9cbcf); }

.canvas { position: relative; grid-area: 1 / 2 / 3 / 3; border: solid #111; border-width: 1px 0 1px 1px; background: #fff; overflow: hidden; }
.drawing { position: absolute; width: 100%; height: 100%; }
.hud { position: absolute; top: 30px; left: 112px; display: flex; align-items: center; gap: 1px; }
.hud button { width: 22px; }
.hud svg { width: 18px; height: 18px; margin: auto; }
.hud .caret { margin: 0 3px; border-top-color: #777; }
.docbuttons { position: absolute; top: 8px; right: 10px; display: flex; gap: 9px; }
.docbuttons svg { width: 14px; height: 14px; }
.collapse { position: absolute; top: 218px; left: -1px; display: grid; place-items: center; width: 9px; height: 39px; border: 1px solid #111; border-left: 0; background: #d7dadf; }
.taskpane { position: absolute; top: 59px; right: 0; width: 23px; border: 1px solid #111; border-right: 0; background: #111; display: grid; gap: 1px; }
.taskpane button { display: grid; place-items: center; height: 23px; border: 1px solid #d0d1d4; background: #a6a7aa; }
.taskpane .active { background: #f4f5f7; }
.taskpane svg { width: 18px; height: 18px; }

.sheets { grid-area: 3 / 1 / 4 / 3; display: flex; background: #e2e5ea; }
.sheetnav { display: flex; gap: 1px; width: 65px; padding: 2px 1px 0; }
.sheetnav button { display: grid; place-items: center; flex: 1; border: 1px solid #999; background: #bbbcc0; }
.sheetnav svg { width: 8px; height: 10px; }
.sheet { display: flex; align-items: center; gap: 2px; width: 73px; padding-left: 10px; border: solid #111; border-width: 0 1px 1px; background: #edeff2; line-height: 14px; }
.addsheet { display: grid; place-items: center; width: 33px; border: solid #111; border-width: 0 1px 2px 0; background: #aaabae; }

.tools { grid-area: 1 / 3 / 4 / 4; display: flex; flex-direction: column; padding: 5px 3px 0; border: solid #8c8e93; border-width: 1px 0 1px 1px; background: #d7dadf; }
.tools .grip { height: 2px; margin: 0 0 6px; background: repeating-linear-gradient(90deg, #222 0 2px, transparent 2px 4px); }
.tools button { display: flex; align-items: center; gap: 9px; height: 23px; padding-left: 2px; }
.tools button svg { width: 18px; height: 18px; }
.tools .drop::after { content: ""; margin-top: 2px; border: 3px solid transparent; border-top-color: #444; border-bottom: 0; }
.tools hr { width: 100%; height: 2px; margin: 2px 0 4px; border: 0; border-top: 1px solid #777; background: #f0f0f0; }
.tools .more { height: 16px; padding-left: 15px; }
.tools .more svg { width: 10px; height: 12px; }

/* lower toolbars */
.strip { display: flex; align-items: center; background: #d7dadf; }
.strip .grip { width: 2px; height: 22px; margin: 0 6px 0 4px; background: repeating-linear-gradient(#333 0 2px, transparent 2px 4px); }
.strip button { flex: none; width: 23px; }
.strip button svg { width: 18px; height: 18px; margin: auto; }
.format { height: 29px; border-bottom: 1px solid #999ca1; background: linear-gradient(90deg, transparent 180px, #999ca1 180px 181px, #fff 181px 182px, transparent 182px) #d7dadf; }
.filters { height: 31px; border: solid #fff; border-width: 1px 0; overflow: hidden; }
.filters .select { width: 27px; height: 24px; border: 1px solid #666; background: #aaabae; }
.filters .selectdrop { display: grid; place-items: center; width: 13px; height: 24px; border: 1px solid #999; border-left: 0; background: #e4e6ea; }
.filters .rule { flex: none; width: 1px; height: 20px; margin: 0 4px; background: #777; }

.status { display: flex; align-items: center; gap: 16px; height: 25px; padding: 0 2px 3px; border-top: 2px solid #111; background: #d7dadf; white-space: nowrap; }
.scale { display: flex; align-items: center; gap: 10px; }
.units { display: flex; align-items: center; gap: 16px; margin-left: 16px; }
.help { width: 14px; height: 14px; border: 1px solid #356; background: #fff; color: #14941c; font-weight: 700; line-height: 12px; }
.tag { margin: 0 5px 0 auto; }
```
